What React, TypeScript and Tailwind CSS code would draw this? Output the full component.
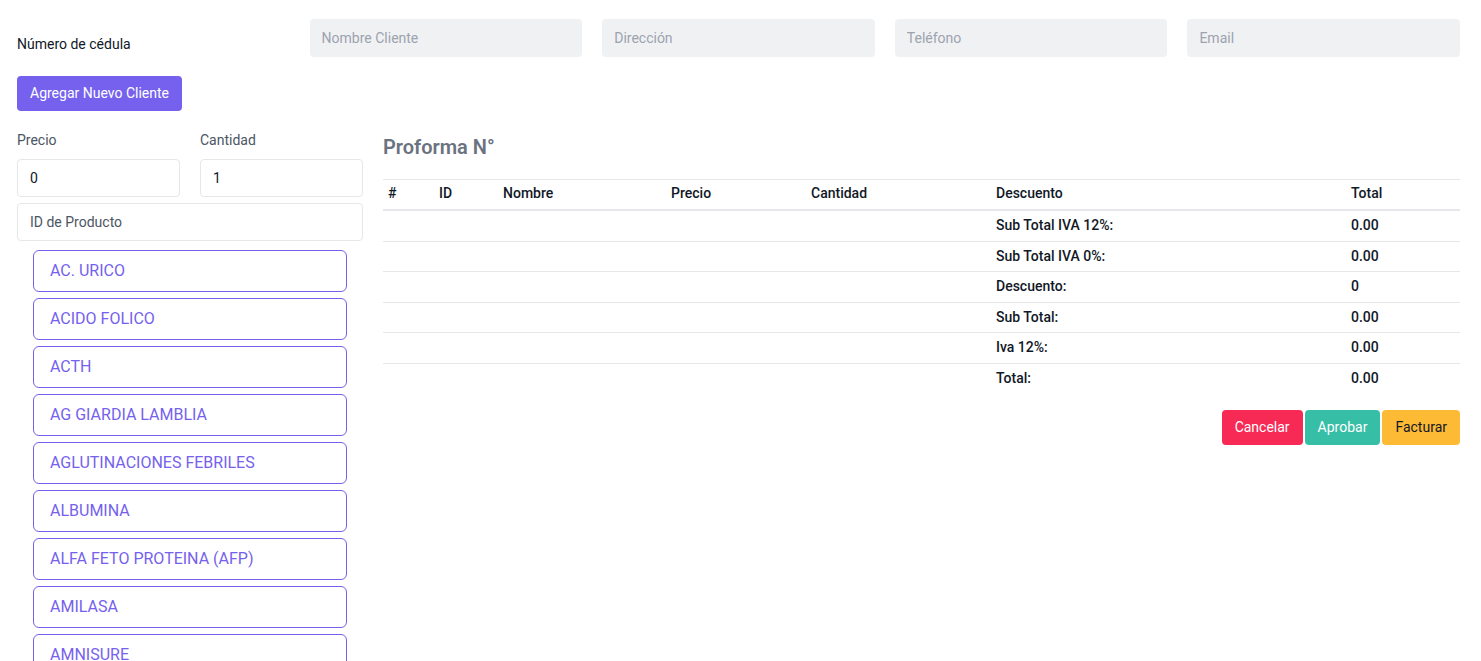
import React from 'react';

const productos = [
  'AC. URICO',
  'ACIDO FOLICO',
  'ACTH',
  'AG GIARDIA LAMBLIA',
  'AGLUTINACIONES FEBRILES',
  'ALBUMINA',
  'ALFA FETO PROTEINA (AFP)',
  'AMILASA',
  'AMNISURE',
];

const totales = [
  { label: 'Sub Total IVA 12%:', value: '0.00' },
  { label: 'Sub Total IVA 0%:', value: '0.00' },
  { label: 'Descuento:', value: '0' },
  { label: 'Sub Total:', value: '0.00' },
  { label: 'Iva 12%:', value: '0.00' },
  { label: 'Total:', value: '0.00' },
];

const cols = 'grid grid-cols-[50px_64px_168px_140px_185px_355px_1fr] items-center';

const App: React.FC = () => {
  return (
    <div className="min-h-screen bg-white pl-[17px] pr-[21px] pt-[19px] text-[14px] text-[#111827] font-['Roboto',sans-serif]">
      {/* Datos del cliente */}
      <div className="grid grid-cols-5 gap-5">
        <div className="pt-[15px] leading-5">Número de cédula</div>
        {['Nombre Cliente', 'Dirección', 'Teléfono', 'Email'].map((p) => (
          <input
            key={p}
            placeholder={p}
            className="h-[38px] rounded bg-[#f0f1f3] px-3 text-[14px] outline-none placeholder:text-[#9ca3af]"
          />
        ))}
      </div>

      <button className="mt-[19px] h-[35px] rounded bg-[#7561ee] px-[13px] text-[14px] text-white">
        Agregar Nuevo Cliente
      </button>

      <div className="mt-[19px] flex gap-5">
        {/* Productos */}
        <div className="w-[346px] shrink-0">
          <div className="grid grid-cols-2 gap-5">
            <div>
              <div className="leading-5 text-[#4b5563]">Precio</div>
              <input defaultValue="0" className="mt-[9px] h-[38px] w-full rounded border border-[#e5e7eb] px-3 outline-none" />
            </div>
            <div>
              <div className="leading-5 text-[#4b5563]">Cantidad</div>
              <input defaultValue="1" className="mt-[9px] h-[38px] w-full rounded border border-[#e5e7eb] px-3 outline-none" />
            </div>
          </div>
          <input
            placeholder="ID de Producto"
            className="mt-[6px] h-[38px] w-full rounded border border-[#e5e7eb] px-3 outline-none placeholder:text-[#4b5563]"
          />
          <div className="mt-[9px] flex flex-col gap-[6px] px-4">
            {productos.map((p) => (
              <button
                key={p}
                className="h-[42px] rounded-md border border-[#7561ee] px-4 text-left text-[16px] text-[#7561ee]"
              >
                {p}
              </button>
            ))}
          </div>
        </div>

        {/* Proforma */}
        <div className="flex-1">
          <h2 className="mt-[3px] text-[20px] font-semibold leading-7 text-[#6b7280]">Proforma N°</h2>
          <div className="mt-[18px] border-t border-[#e5e7eb] font-medium">
            <div className={`${cols} h-[31px] pb-[2px] border-b-2 border-[#e5e7eb]`}>
              <div className="pl-[5px]">#</div>
              <div className="pl-[6px]">ID</div>
              <div className="pl-[6px]">Nombre</div>
              <div className="pl-[6px]">Precio</div>
              <div className="pl-[6px]">Cantidad</div>
              <div className="pl-[6px]">Descuento</div>
              <div className="pl-[6px]">Total</div>
            </div>
            {totales.map((t, i) => (
              <div
                key={t.label}
                className={`${cols} h-[30.5px] ${i < totales.length - 1 ? 'border-b border-[#e5e7eb]' : ''}`}
              >
                <div />
                <div />
                <div />
                <div />
                <div />
                <div className="pl-[6px]">{t.label}</div>
                <div className="pl-[6px]">{t.value}</div>
              </div>
            ))}
          </div>

          <div className="mt-[16px] flex justify-end gap-[2px]">
            <button className="h-[35px] rounded bg-[#f62a55] px-[13px] text-white">Cancelar</button>
            <button className="h-[35px] rounded bg-[#37bea6] px-[13px] text-white">Aprobar</button>
            <button className="h-[35px] rounded bg-[#fdba35] px-[13px] text-[#111827]">Facturar</button>
          </div>
        </div>
      </div>
    </div>
  );
};

export default App;
